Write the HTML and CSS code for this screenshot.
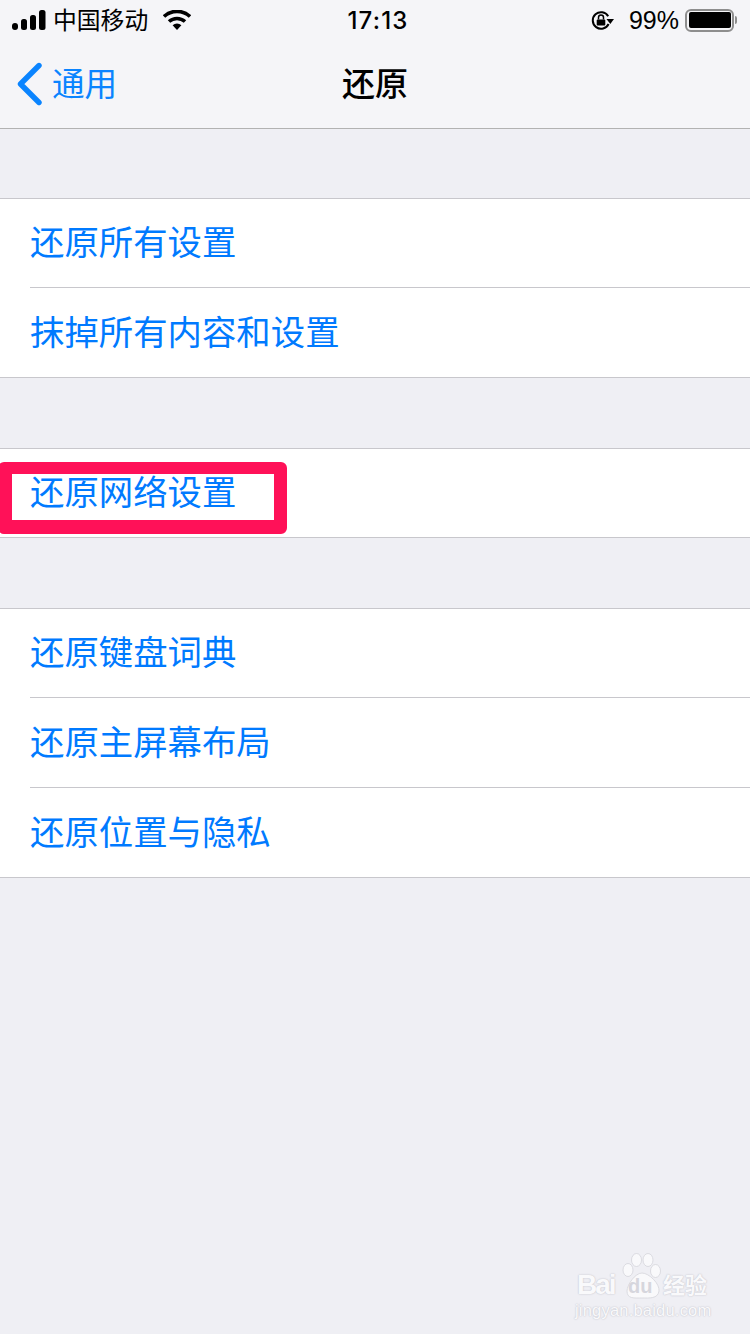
FILE: index.html
```html
<!DOCTYPE html>
<html lang="zh">
<head>
  <meta charset="utf-8">
  <title>还原</title>
  <link rel="stylesheet" href="styles.css">
</head>
<body>
  <div class="top">
    <div class="status">
      <div class="status-left">
        <svg class="signal" width="34" height="20" viewBox="0 0 34 20">
          <rect x="0" y="13" width="6" height="7" rx="3"/>
          <rect x="9" y="9" width="6" height="11" rx="2.5"/>
          <rect x="18" y="5" width="6" height="15" rx="2.5"/>
          <rect x="27" y="0" width="6.5" height="20" rx="2.5"/>
        </svg>
        <span class="carrier">中国移动</span>
        <svg class="wifi" width="28" height="20" viewBox="0 0 28 20">
          <path d="M1 6.5 A19 19 0 0 1 27 6.5" fill="none" stroke="#000" stroke-width="3.6"/>
          <path d="M6 11.5 A12 12 0 0 1 22 11.5" fill="none" stroke="#000" stroke-width="3.6"/>
          <path d="M9.6 15.2 A6.5 6.5 0 0 1 18.4 15.2 L14 20 Z"/>
        </svg>
      </div>
      <div class="clock">17:13</div>
      <div class="status-right">
        <svg class="lock" width="24" height="22" viewBox="0 0 24 22">
          <path d="M17.6 15 A8.3 8.3 0 1 1 17.2 7.2" fill="none" stroke="#000" stroke-width="2"/>
          <path d="M15.5 10 L23 10 L19.3 15 Z"/>
          <rect x="5.7" y="10.5" width="8.6" height="6" rx="1"/>
          <path d="M7.5 10.5 V8.5 A2.5 2.5 0 0 1 12.5 8.5 V10.5" fill="none" stroke="#000" stroke-width="1.5"/>
        </svg>
        <span class="battery-text">99%</span>
        <div class="battery">
          <div class="battery-fill"></div>
        </div>
        <div class="battery-cap"></div>
      </div>
    </div>
    <div class="nav">
      <div class="back">
        <svg width="28" height="44" viewBox="0 0 28 44">
          <path d="M24 3.5 L5.5 22 L24 40.5" fill="none" stroke="#0a84ff" stroke-width="5.4" stroke-linecap="round" stroke-linejoin="round"/>
        </svg>
        <span>通用</span>
      </div>
      <div class="nav-title">还原</div>
    </div>
  </div>

  <div class="group">
    <div class="row"><span>还原所有设置</span></div>
    <div class="row"><span>抹掉所有内容和设置</span></div>
  </div>

  <div class="group">
    <div class="row"><span>还原网络设置</span></div>
  </div>

  <div class="group">
    <div class="row"><span>还原键盘词典</span></div>
    <div class="row"><span>还原主屏幕布局</span></div>
    <div class="row"><span>还原位置与隐私</span></div>
  </div>

  <div class="marker"></div>

  <div class="watermark">
    <span class="wm-bai">Bai</span>
    <svg class="wm-paw" width="40" height="48" viewBox="0 0 40 48">
      <ellipse cx="6" cy="17" rx="5" ry="6.5"/>
      <ellipse cx="14.5" cy="7" rx="5" ry="6.5"/>
      <ellipse cx="26" cy="7" rx="5" ry="6.5"/>
      <ellipse cx="33.5" cy="18" rx="5" ry="6.5"/>
      <path d="M20 20 C27 20 38 31 37 38 C36 46 27 45 20 45 C12 45 5 46 5 38 C5 32 13 20 20 20 Z"/>
    </svg>
    <span class="wm-du">du</span>
    <span class="wm-cn">经验</span>
    <div class="wm-url">jingyan.baidu.com</div>
  </div>
</body>
</html>
```

FILE: styles.css
```css
* {
  box-sizing: border-box;
}

body {
  margin: 0;
  height: 1334px;
  position: relative;
  overflow: hidden;
  background-color: #efeff4;
  font-family: "Liberation Sans", "Noto Sans CJK SC", sans-serif;
}

.top {
  height: 129px;
  background-color: #f5f5f8;
  border-bottom: 1px solid #b2b2b2;
}

.status {
  height: 40px;
  display: grid;
  grid-template-columns: 1fr auto 1fr;
  align-items: center;
  padding: 0 12px;
  color: #000;
}

.status-left {
  display: flex;
  align-items: center;
}

.status-right {
  display: flex;
  align-items: center;
  justify-content: flex-end;
}

.carrier {
  font-family: "Noto Sans CJK SC", sans-serif;
  font-size: 23.8px;
  line-height: 40px;
  margin-left: 7px;
  margin-top: -2px;
}

.wifi {
  margin-left: 15px;
}

.clock {
  font-family: Inter, "Liberation Sans", sans-serif;
  font-size: 24px;
  font-weight: 500;
  letter-spacing: 1.2px;
  margin-left: 6px;
}

.battery-text {
  font-size: 25px;
  margin-left: 14px;
}

.battery {
  width: 49px;
  height: 23px;
  margin-left: 6px;
  padding: 1.5px;
  border: 2px solid #8e8e8e;
  border-radius: 6px;
}

.battery-fill {
  height: 100%;
  background-color: #000;
  border-radius: 2px;
}

.battery-cap {
  width: 2px;
  height: 8px;
  margin-left: 1px;
  margin-right: 1px;
  background-color: #8e8e8e;
  border-radius: 0 2px 2px 0;
}

.nav {
  height: 88px;
  display: flex;
  align-items: center;
  justify-content: center;
  position: relative;
}

.back {
  position: absolute;
  left: 15px;
  top: 0;
  height: 88px;
  display: flex;
  align-items: center;
  color: #0a84ff;
  font-family: "Noto Sans CJK SC", sans-serif;
  font-size: 32.6px;
}

.back span {
  margin-left: 9px;
  margin-top: -5px;
}

.nav-title {
  font-family: "Noto Sans CJK SC", sans-serif;
  font-size: 33px;
  font-weight: 500;
  color: #000;
  margin-top: -4px;
}

.group {
  margin-top: 70px;
  background-color: #fff;
  border-top: 1px solid #c8c7cc;
  border-bottom: 1px solid #c8c7cc;
}

.top + .group {
  margin-top: 69px;
}

.row {
  height: 89px;
  margin-left: 30px;
  padding-bottom: 6px;
  display: flex;
  align-items: center;
  color: #007aff;
  font-family: "Noto Sans CJK SC", sans-serif;
  font-size: 34.4px;
  border-bottom: 1px solid #c8c7cc;
}

.row:nth-child(2):not(:last-child) {
  height: 90px;
}

.row:last-child {
  border-bottom: none;
}

.row:only-child {
  height: 88px;
}

/* the marker was drawn by hand over the row */
.marker {
  position: absolute;
  left: -2px;
  top: 462px;
  width: 289px;
  height: 72px;
  border: solid #ff1158;
  border-width: 12px 13px 14px 14px;
  border-radius: 6px;
}

.watermark {
  position: absolute;
  left: 575px;
  top: 1252px;
  width: 140px;
  height: 70px;
  color: #f9f9fb;
  text-shadow: 0 0 2px #c9c9d1, 0 0 1px #c9c9d1;
}

.wm-bai {
  position: absolute;
  left: 2px;
  top: 18px;
  font-size: 28px;
  font-weight: 700;
  letter-spacing: -2px;
  line-height: 30px;
}

.wm-paw {
  position: absolute;
  left: 47px;
  top: 1px;
  fill: #f9f9fb;
  stroke: #d4d4db;
  stroke-width: 0.8;
}

.wm-du {
  position: absolute;
  left: 53px;
  top: 24px;
  font-size: 20px;
  font-weight: 700;
  line-height: 20px;
  color: #d6d6dd;
  text-shadow: none;
}

.wm-cn {
  position: absolute;
  left: 88px;
  top: 16px;
  font-family: "Noto Sans CJK SC", sans-serif;
  font-size: 22px;
  font-weight: 700;
  line-height: 30px;
  white-space: nowrap;
}

.wm-url {
  position: absolute;
  left: 0;
  top: 48px;
  font-size: 16.5px;
  line-height: 20px;
  white-space: nowrap;
  letter-spacing: 0.2px;
}
```
